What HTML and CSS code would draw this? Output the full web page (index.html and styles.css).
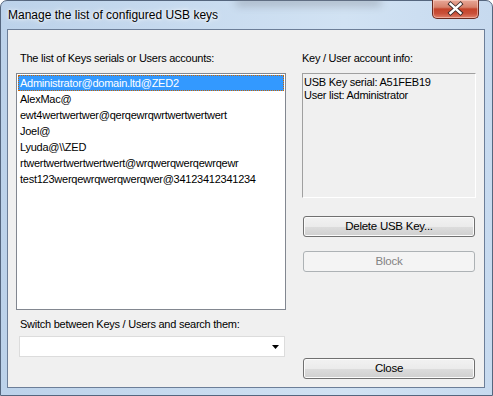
FILE: index.html
```html
<!DOCTYPE html>
<html>
<head>
<meta charset="utf-8">
<link rel="stylesheet" href="styles.css">
</head>
<body>
<div class="window">
  <div class="blur"></div>
  <div class="titlebar">
    <div class="title">Manage the list of configured USB keys</div>
    <div class="close-x">
      <svg width="47" height="19" viewBox="0 0 47 19">
        <path d="M18.5 5 L23.5 9.5 L28.5 5 M18.5 14 L23.5 9.5 L28.5 14" stroke="#3a2a2a" stroke-width="4.2" fill="none" stroke-linecap="square"/>
        <path d="M18.5 5 L23.5 9.5 L28.5 5 M18.5 14 L23.5 9.5 L28.5 14" stroke="#ffffff" stroke-width="2.4" fill="none" stroke-linecap="square"/>
      </svg>
    </div>
  </div>
  <div class="client">
    <div class="left">
      <div class="label">The list of Keys serials or Users accounts:</div>
      <div class="listbox">
        <div class="item selected">Administrator@domain.ltd@ZED2</div>
        <div class="item">AlexMac@</div>
        <div class="item">ewt4wertwertwer@qerqewrqwrtwertwertwert</div>
        <div class="item">Joel@</div>
        <div class="item">Lyuda@\\ZED</div>
        <div class="item">rtwertwertwertwertwert@wrqwerqwerqewrqewr</div>
        <div class="item">test123werqewrqwerqwerqwer@34123412341234</div>
      </div>
      <div class="label label2">Switch between Keys / Users and search them:</div>
      <div class="combo">
        <svg class="arrow" width="7" height="4" viewBox="0 0 7 4"><path d="M0 0 H7 L3.5 4 Z" fill="#000"/></svg>
      </div>
    </div>
    <div class="right">
      <div class="label">Key / User account info:</div>
      <div class="info">
        <div>USB Key serial: A51FEB19</div>
        <div>User list: Administrator</div>
      </div>
      <div class="btn btn-delete">Delete USB Key...</div>
      <div class="btn btn-block disabled">Block</div>
      <div class="btn btn-close">Close</div>
    </div>
  </div>
</div>
</body>
</html>
```
FILE: styles.css
```css
html, body {
  margin: 0;
  padding: 0;
  width: 493px;
  height: 396px;
  overflow: hidden;
  background: #ffffff;
}
.window {
  position: relative;
  width: 493px;
  height: 396px;
  box-sizing: border-box;
  border: 1px solid #55667e;
  border-radius: 7px 7px 0 0;
  background: linear-gradient(90deg, #bcd2ea 0%, #c8dbef 40%, #d1e2f3 70%, #c7daef 100%);
  display: flex;
  flex-direction: column;
  font-family: "Liberation Sans", Arial, sans-serif;
}
.blur {
  position: absolute;
  left: 235px;
  top: -3px;
  width: 145px;
  height: 8px;
  background: #7d8590;
  filter: blur(4px);
  opacity: 0.45;
}
.titlebar {
  position: relative;
  height: 28px;
  display: flex;
  align-items: flex-start;
}
.title {
  font-family: "Liberation Sans", Arial, sans-serif;
  font-size: 12px;
  color: #000;
  padding: 6px 0 0 7px;
  line-height: 16px;
  text-shadow: 0 0 6px #ffffff, 0 0 3px #ffffff;
}
.close-x {
  margin-left: auto;
  margin-right: 13px;
  margin-top: -1px;
  width: 47px;
  height: 19px;
  box-sizing: border-box;
  border: 1px solid #6a2a20;
  border-top: none;
  border-radius: 0 0 5px 5px;
  background: linear-gradient(#e8a898 0%, #d7826c 40%, #c4432a 50%, #c9503a 75%, #e0806a 100%);
  box-shadow: inset 0 0 0 1px rgba(255,220,210,0.5);
  overflow: hidden;
}
.close-x svg { display: block; margin: -1px 0 0 -1px; }
.client {
  margin: 0 7px 0 6px;
  height: 359px;
  box-sizing: border-box;
  border: 1px solid #6c7e98;
  background: #f0f0f0;
  display: flex;
  padding: 22px 8px 8px 8px;
  font-size: 11px;
  letter-spacing: -0.25px;
  color: #000;
}
.left {
  width: 270px;
  display: flex;
  flex-direction: column;
}
.right {
  margin-left: 16px;
  width: 174px;
  display: flex;
  flex-direction: column;
}
.label {
  line-height: 13px;
  height: 13px;
  padding-left: 4px;
  white-space: nowrap;
}
.right .label { padding-left: 0; }
.listbox {
  margin-top: 8px;
  height: 237px;
  box-sizing: border-box;
  border: 1px solid #828790;
  background: #ffffff;
  padding: 1px;
}
.item {
  height: 16px;
  line-height: 16px;
  padding-left: 2px;
  white-space: nowrap;
}
.item.selected {
  background: #3399ff;
  color: #ffffff;
  outline: 1px dotted #cc6600;
  outline-offset: -1px;
}
.label2 { margin-top: 8px; padding-left: 4px; }
.combo {
  margin-top: 5px;
  margin-left: 3px;
  width: 266px;
  height: 21px;
  box-sizing: border-box;
  border: 1px solid #dcdcdc;
  background: #ffffff;
  display: flex;
  align-items: center;
  justify-content: flex-end;
  padding-right: 5px;
}
.arrow { display: block; }
.info {
  margin-top: 8px;
  height: 125px;
  box-sizing: border-box;
  border: 1px solid #a0a0a0;
  border-right-color: #ffffff;
  border-bottom-color: #ffffff;
  padding: 2px 0 0 1px;
  line-height: 13px;
}
.btn {
  margin-left: 1px;
  width: 172px;
  height: 21px;
  box-sizing: border-box;
  border: 1px solid #707070;
  border-radius: 3px;
  background: linear-gradient(#f2f2f2 0%, #ebebeb 50%, #dddddd 50%, #cfcfcf 100%);
  box-shadow: inset 0 0 0 1px #fbfbfb;
  text-align: center;
  line-height: 19px;
  font-size: 11.5px;
}
.btn-delete { margin-top: 18px; }
.btn-block { margin-top: 14px; }
.btn.disabled {
  border-color: #adb2b5;
  background: #f4f4f4;
  box-shadow: none;
  color: #838383;
}
.btn-close { margin-top: auto; }
```
